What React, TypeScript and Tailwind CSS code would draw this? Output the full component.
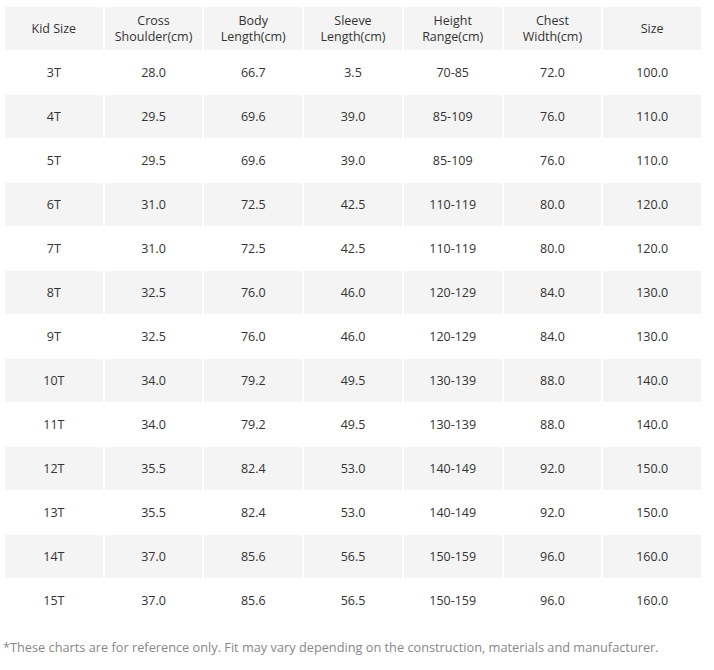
import React from 'react';

const HEADERS = [
  ['Kid Size'],
  ['Cross', 'Shoulder(cm)'],
  ['Body', 'Length(cm)'],
  ['Sleeve', 'Length(cm)'],
  ['Height', 'Range(cm)'],
  ['Chest', 'Width(cm)'],
  ['Size'],
];

const ROWS = [
  ['3T', '28.0', '66.7', '3.5', '70-85', '72.0', '100.0'],
  ['4T', '29.5', '69.6', '39.0', '85-109', '76.0', '110.0'],
  ['5T', '29.5', '69.6', '39.0', '85-109', '76.0', '110.0'],
  ['6T', '31.0', '72.5', '42.5', '110-119', '80.0', '120.0'],
  ['7T', '31.0', '72.5', '42.5', '110-119', '80.0', '120.0'],
  ['8T', '32.5', '76.0', '46.0', '120-129', '84.0', '130.0'],
  ['9T', '32.5', '76.0', '46.0', '120-129', '84.0', '130.0'],
  ['10T', '34.0', '79.2', '49.5', '130-139', '88.0', '140.0'],
  ['11T', '34.0', '79.2', '49.5', '130-139', '88.0', '140.0'],
  ['12T', '35.5', '82.4', '53.0', '140-149', '92.0', '150.0'],
  ['13T', '35.5', '82.4', '53.0', '140-149', '92.0', '150.0'],
  ['14T', '37.0', '85.6', '56.5', '150-159', '96.0', '160.0'],
  ['15T', '37.0', '85.6', '56.5', '150-159', '96.0', '160.0'],
];

export default function App() {
  return (
    <div className="w-[714px] h-[670px] bg-white text-[#333] font-['Open_Sans',sans-serif] overflow-hidden">
      <div className="pt-[7px] pl-[5px] w-[701px]">
        {/* size table */}
        <div className="grid grid-cols-7 gap-x-[2px] gap-y-[1px]">
          {HEADERS.map((h, i) => (
            <div key={i} className="h-[43px] pt-[1px] bg-[#f4f4f4] flex flex-col items-center justify-center text-[12.5px] leading-[16px]">
              {h.map(line => <span key={line}>{line}</span>)}
            </div>
          ))}
          {ROWS.map((row, r) =>
            row.map((cell, c) => (
              <div
                key={`${r}-${c}`}
                className={`h-[43px] pt-[1px] flex items-center justify-center text-[12.5px] ${r % 2 === 1 ? 'bg-[#f4f4f4]' : 'bg-white'}`}
              >
                {cell}
              </div>
            ))
          )}
        </div>
      </div>
      <p className="mt-[16px] pl-[3px] text-[12.75px] text-[#888] whitespace-nowrap">
        *These charts are for reference only. Fit may vary depending on the construction, materials and manufacturer.
      </p>
    </div>
  );
}
